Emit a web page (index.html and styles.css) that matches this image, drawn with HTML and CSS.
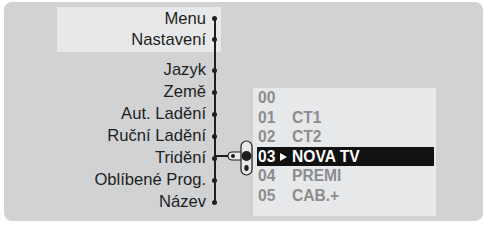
FILE: index.html
```html
<!DOCTYPE html>
<html lang="cs">
<head>
  <meta charset="UTF-8">
  <title>Tridění</title>
  <link rel="stylesheet" href="styles.css">
</head>
<body>
<div class="screen">
  <div class="menu">
    <div class="menu-top">
      <div class="row"><span>Menu</span><i class="dot"></i></div>
      <div class="row"><span>Nastavení</span><i class="dot"></i></div>
    </div>
    <div class="menu-list">
      <div class="row"><span>Jazyk</span><i class="dot"></i></div>
      <div class="row"><span>Země</span><i class="dot"></i></div>
      <div class="row"><span>Aut. Ladění</span><i class="dot"></i></div>
      <div class="row"><span>Ruční Ladění</span><i class="dot"></i></div>
      <div class="row"><span>Tridění</span><i class="dot"></i></div>
      <div class="row"><span>Oblíbené Prog.</span><i class="dot"></i></div>
      <div class="row"><span>Název</span><i class="dot"></i></div>
    </div>
  </div>

  <!-- knob joining Tridění to the channel list -->
  <svg class="knob" width="44" height="40" viewBox="0 0 44 40">
    <line x1="2" y1="18" x2="18" y2="18" stroke="#1e1e1e" stroke-width="2"/>
    <rect x="16" y="14" width="19" height="8" rx="4" fill="#e7e8ea" stroke="#1e1e1e" stroke-width="1.2"/>
    <circle cx="21" cy="18" r="2" fill="#1e1e1e"/>
    <rect x="29" y="3" width="11" height="34" rx="5.5" fill="#e7e8ea" stroke="#1e1e1e" stroke-width="1.2"/>
    <circle cx="34.5" cy="18" r="5" fill="#1e1e1e"/>
    <ellipse cx="34.5" cy="30" rx="2.2" ry="3" fill="#1e1e1e"/>
  </svg>

  <div class="channels">
    <div class="ch"><span class="num">00</span><span class="arrow"></span><span></span></div>
    <div class="ch"><span class="num">01</span><span class="arrow"></span><span>CT1</span></div>
    <div class="ch"><span class="num">02</span><span class="arrow"></span><span>CT2</span></div>
    <div class="ch sel"><span class="num">03</span><span class="arrow"></span><span>NOVA TV</span></div>
    <div class="ch"><span class="num">04</span><span class="arrow"></span><span>PREMI</span></div>
    <div class="ch"><span class="num">05</span><span class="arrow"></span><span>CAB.+</span></div>
  </div>
</div>
</body>
</html>
```

FILE: styles.css
```css
* {
  margin: 0;
  padding: 0;
  box-sizing: border-box;
}

body {
  font-family: "Liberation Sans", Arial, sans-serif;
  background: #fff;
}

.screen {
  position: relative;
  margin: 2px 0 0 4px;
  width: 479px;
  height: 219px;
  border-radius: 8px;
  background: #d1d2d4;
  display: flex;
  align-items: flex-start;
}

/* left menu tree */
.menu {
  position: relative;
  margin: 5px 0 0 53px;
  width: 164px;
  font-size: 16.6px;
  color: #1e1e1e;
}

.menu::before {
  content: "";
  position: absolute;
  left: 157px;
  top: 10px;
  bottom: 11px;
  width: 2px;
  background: #1e1e1e;
}

.menu-top {
  background: #e7e8ea;
  padding: 1px 0 2px;
}

.menu-top .row {
  height: 21px;
}

.menu-list {
  margin-top: 7px;
}

.row {
  display: flex;
  justify-content: flex-end;
  align-items: center;
  height: 22px;
  padding-right: 4px;
  white-space: nowrap;
}

.dot {
  width: 5px;
  height: 5px;
  margin-left: 6px;
  border-radius: 50%;
  background: #1e1e1e;
}

.knob {
  position: absolute;
  left: 208px;
  top: 136px;
}

/* channel list */
.channels {
  margin: 86px 0 0 32px;
  width: 183px;
  height: 128px;
  background: #e7e8ea;
}

.ch {
  display: flex;
  align-items: center;
  height: 19.6px;
  line-height: 19.6px;
  margin: 0 2px 0 4px;
  padding-left: 1px;
  font-size: 15.6px;
  font-weight: bold;
  color: #8c8d8f;
  white-space: nowrap;
}

.ch .num {
  width: 19px;
}

.ch .arrow {
  width: 15px;
}

.ch.sel {
  background: #111;
  color: #fff;
}

.ch.sel .arrow::before {
  content: "";
  display: block;
  margin-left: 3px;
  width: 0;
  height: 0;
  border-left: 7px solid #fff;
  border-top: 4px solid transparent;
  border-bottom: 4px solid transparent;
}
```
